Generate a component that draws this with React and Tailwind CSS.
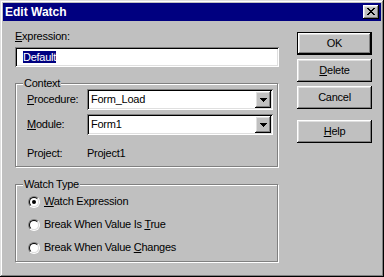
const raised =
  'shadow-[inset_-1px_-1px_0_#000,inset_1px_1px_0_#fff,inset_-2px_-2px_0_#808080,inset_2px_2px_0_#dfdfdf]';
const sunken =
  'shadow-[inset_1px_1px_0_#808080,inset_-1px_-1px_0_#fff,inset_2px_2px_0_#000,inset_-2px_-2px_0_#dfdfdf]';

function Key({ children }) {
  return <span className="underline underline-offset-[1px]">{children}</span>;
}

function Combo({ value }) {
  return (
    <div className={`flex h-[21px] w-[186px] bg-white p-[2px] ${sunken}`}>
      <div className="flex flex-1 items-center pl-[2px] leading-[13px]">{value}</div>
      <div className={`flex h-[17px] w-[16px] items-center justify-center bg-[#c0c0c0] ${raised}`}>
        <svg width="7" height="4" viewBox="0 0 7 4" shapeRendering="crispEdges">
          <path d="M0 0h7v1H0zM1 1h5v1H1zM2 2h3v1H2zM3 3h1v1H3z" fill="#000" />
        </svg>
      </div>
    </div>
  );
}

function Radio({ checked }) {
  return (
    <span className="flex h-[12px] w-[12px] shrink-0 rounded-full border border-t-[#808080] border-l-[#808080] border-b-white border-r-white">
      <span className="flex h-full w-full items-center justify-center rounded-full border border-t-black border-l-black border-b-[#dfdfdf] border-r-[#dfdfdf] bg-white">
        {checked && <span className="h-[4px] w-[4px] rounded-full bg-black" />}
      </span>
    </span>
  );
}

function GroupBox({ label, className, children }) {
  return (
    <div
      className={`relative w-[263px] border border-[#808080] shadow-[inset_1px_1px_0_#fff,1px_1px_0_#fff] ${className}`}
    >
      <span className="absolute -top-[7px] left-[7px] bg-[#c0c0c0] px-[1px] leading-[13px]">{label}</span>
      {children}
    </div>
  );
}

function Btn({ children, isDefault, className = '' }) {
  return (
    <button
      className={`flex h-[23px] w-[75px] items-center justify-center bg-[#c0c0c0] leading-[13px] ${raised} ${
        isDefault ? 'border border-black' : ''
      } ${className}`}
    >
      {children}
    </button>
  );
}

export default function App() {
  return (
    <div className="h-[277px] w-[384px] bg-[#c0c0c0] p-[3px] font-['Liberation_Sans',Arial,sans-serif] text-[11px] tracking-[-0.25px] text-black shadow-[inset_-1px_-1px_0_#000,inset_1px_1px_0_#dfdfdf,inset_-2px_-2px_0_#808080,inset_2px_2px_0_#fff]">
      {/* Title bar */}
      <div className="flex h-[18px] items-center justify-between bg-[#000080] pl-[2px] pr-[2px]">
        <span className="text-[12px] font-bold leading-[14px] tracking-normal text-white">Edit Watch</span>
        <button className={`flex h-[14px] w-[16px] items-center justify-center bg-[#c0c0c0] pb-[1px] ${raised}`}>
          <svg width="8" height="7" viewBox="0 0 8 7" shapeRendering="crispEdges">
            <path
              d="M0 0h2v1H0zM6 0h2v1H6zM1 1h2v1H1zM5 1h2v1H5zM2 2h4v1H2zM3 3h2v1H3zM2 4h4v1H2zM1 5h2v1H1zM5 5h2v1H5zM0 6h2v1H0zM6 6h2v1H6z"
              fill="#000"
            />
          </svg>
        </button>
      </div>

      <div className="flex pl-[12px]">
        {/* Left column */}
        <div className="flex w-[264px] flex-col">
          <div className="mt-[9px] h-[13px] leading-[13px]">
            <Key>E</Key>xpression:
          </div>
          <div className={`mt-[4px] flex h-[20px] items-center bg-white py-[2px] pl-[8px] pr-[2px] ${sunken}`}>
            <span className="bg-[#000080] leading-[12px] text-white">Default</span>
          </div>

          <GroupBox label="Context" className="mt-[16px] h-[84px] pl-[11px] pt-[5px]">
            <div className="flex items-center">
              <span className="w-[60px] leading-[13px]">
                <Key>P</Key>rocedure:
              </span>
              <Combo value="Form_Load" />
            </div>
            <div className="mt-[4px] flex items-center">
              <span className="w-[60px] leading-[13px]">
                <Key>M</Key>odule:
              </span>
              <Combo value="Form1" />
            </div>
            <div className="mt-[8px] flex h-[21px] items-center">
              <span className="w-[60px] leading-[13px]">Project:</span>
              <span className="leading-[13px]">Project1</span>
            </div>
          </GroupBox>

          <GroupBox label="Watch Type" className="mt-[17px] h-[78px] pl-[12px] pt-[5px]">
            <div className="flex h-[23px] items-center gap-[4px]">
              <Radio checked />
              <span className="leading-[13px]">
                <Key>W</Key>atch Expression
              </span>
            </div>
            <div className="flex h-[23px] items-center gap-[4px]">
              <Radio />
              <span className="leading-[13px]">
                Break When Value Is <Key>T</Key>rue
              </span>
            </div>
            <div className="flex h-[23px] items-center gap-[4px]">
              <Radio />
              <span className="leading-[13px]">
                Break When Value <Key>C</Key>hanges
              </span>
            </div>
          </GroupBox>
        </div>

        {/* Right column */}
        <div className="ml-[18px] flex w-[75px] flex-col">
          <Btn isDefault className="mt-[11px]">
            OK
          </Btn>
          <Btn className="mt-[4px]">
            <Key>D</Key>elete
          </Btn>
          <Btn className="mt-[4px]">Cancel</Btn>
          <Btn className="mt-[11px]">
            <Key>H</Key>elp
          </Btn>
        </div>
      </div>
    </div>
  );
}
